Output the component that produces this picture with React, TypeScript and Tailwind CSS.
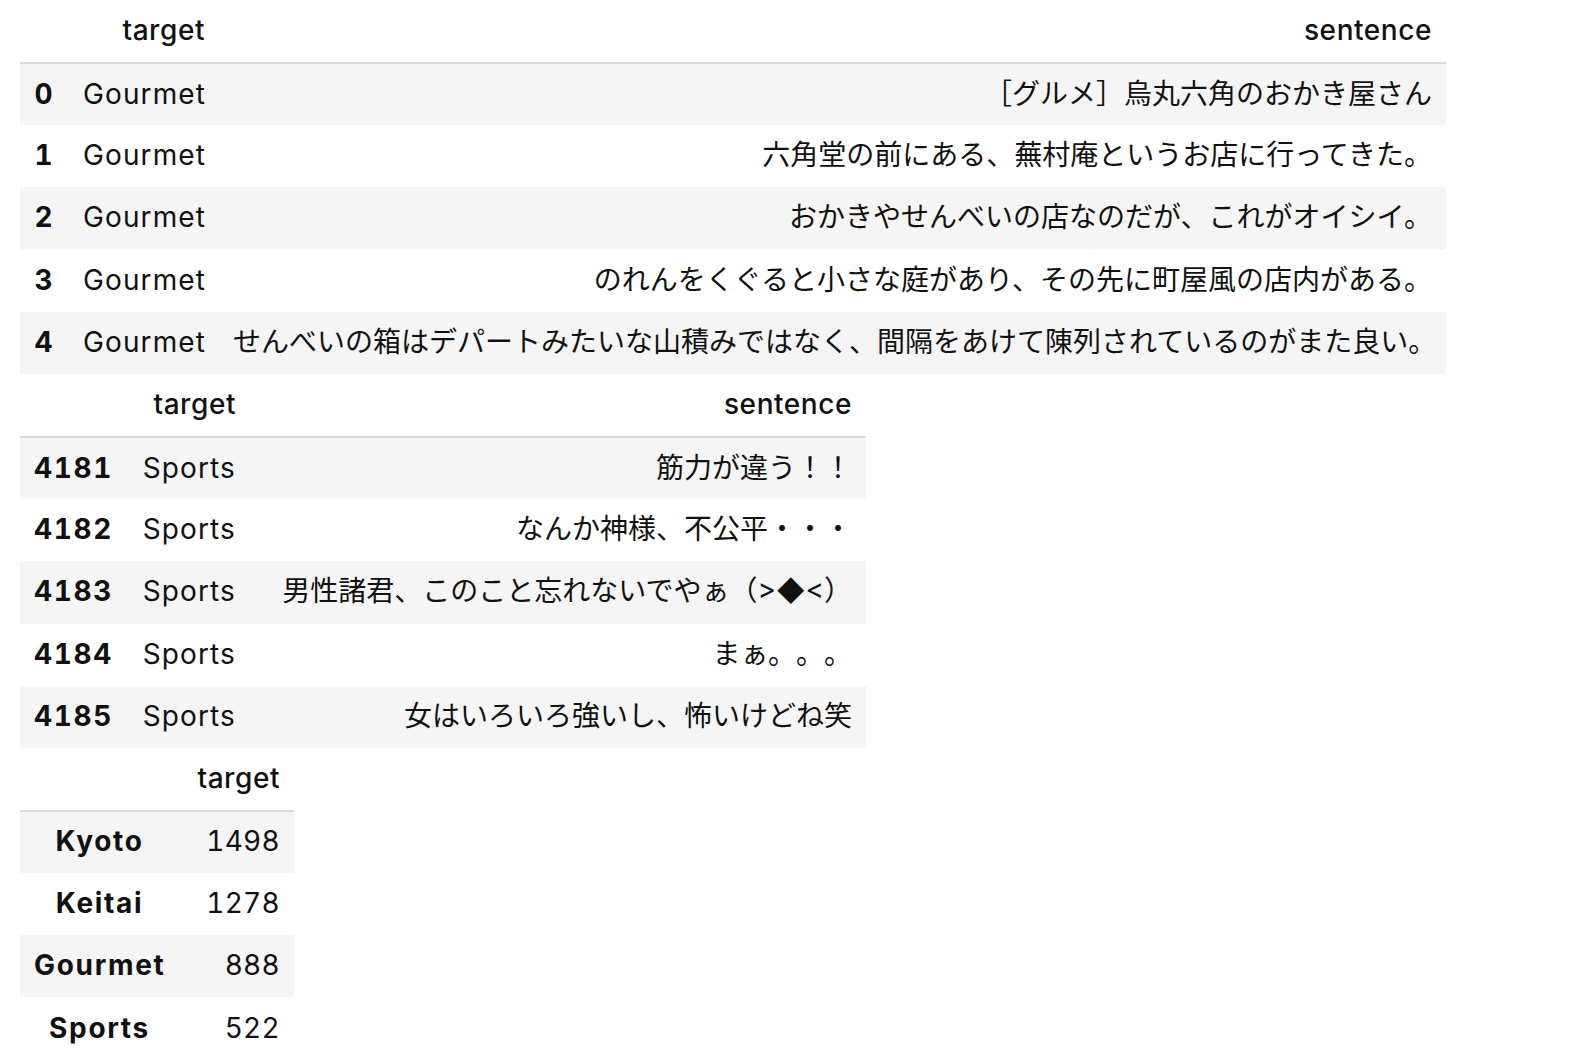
import React from "react";

type Row = { idx: string; cells: string[] };

const font = { fontFamily: '"Inter", "Noto Sans CJK JP", sans-serif' };

const gourmet: Row[] = [
  { idx: "0", cells: ["Gourmet", "［グルメ］烏丸六角のおかき屋さん"] },
  { idx: "1", cells: ["Gourmet", "六角堂の前にある、蕪村庵というお店に行ってきた。"] },
  { idx: "2", cells: ["Gourmet", "おかきやせんべいの店なのだが、これがオイシイ。"] },
  { idx: "3", cells: ["Gourmet", "のれんをくぐると小さな庭があり、その先に町屋風の店内がある。"] },
  { idx: "4", cells: ["Gourmet", "せんべいの箱はデパートみたいな山積みではなく、間隔をあけて陳列されているのがまた良い。"] },
];

const sports: Row[] = [
  { idx: "4181", cells: ["Sports", "筋力が違う！！"] },
  { idx: "4182", cells: ["Sports", "なんか神様、不公平・・・"] },
  { idx: "4183", cells: ["Sports", "男性諸君、このこと忘れないでやぁ（>◆<）"] },
  { idx: "4184", cells: ["Sports", "まぁ。。。"] },
  { idx: "4185", cells: ["Sports", "女はいろいろ強いし、怖いけどね笑"] },
];

const counts: Row[] = [
  { idx: "Kyoto", cells: ["1498"] },
  { idx: "Keitai", cells: ["1278"] },
  { idx: "Gourmet", cells: ["888"] },
  { idx: "Sports", cells: ["522"] },
];

// latin-only cells get a little tracking so Inter reads as wide as the original
const isLatin = (s: string) => /^[\x20-\x7e]+$/.test(s);
const isNumber = (s: string) => /^\d+$/.test(s);

function DataFrame({
  widths,
  headers,
  rows,
}: {
  widths: number[];
  headers: string[];
  rows: Row[];
}) {
  const total = widths.reduce((a, b) => a + b, 0);
  return (
    <table className="table-fixed text-[28px] text-[#111]" style={{ width: total }}>
      <colgroup>
        {widths.map((w, i) => (
          <col key={i} style={{ width: w }} />
        ))}
      </colgroup>
      <thead>
        <tr className="h-[63px]">
          <th className="border-b-2 border-[#d9d9d9]" />
          {headers.map((h) => (
            <th
              key={h}
              className="border-b-2 border-[#d9d9d9] px-[14px] pb-[2px] text-right font-medium leading-none tracking-[0.02em]"
            >
              {h}
            </th>
          ))}
        </tr>
      </thead>
      <tbody>
        {rows.map((r, i) => (
          <tr key={r.idx} className={`h-[62.2px] ${i % 2 === 0 ? "bg-[#f5f5f5]" : "bg-white"}`}>
            <th className="px-[14px] pb-[2px] text-center font-bold leading-none whitespace-nowrap tabular-nums tracking-[0.06em]">
              {r.idx}
            </th>
            {r.cells.map((c, j) => (
              <td
                key={j}
                className={`px-[14px] pb-[2px] text-right font-normal leading-none whitespace-nowrap ${
                  isNumber(c) ? "tabular-nums tracking-[0.01em]" : isLatin(c) ? "tracking-[0.04em]" : ""
                }`}
              >
                {c}
              </td>
            ))}
          </tr>
        ))}
      </tbody>
    </table>
  );
}

export default function App() {
  return (
    <div className="min-h-screen bg-white pl-5 [text-spacing-trim:space-all]" style={font}>
      <DataFrame widths={[49, 150, 1227]} headers={["target", "sentence"]} rows={gourmet} />
      <DataFrame widths={[107, 123, 616]} headers={["target", "sentence"]} rows={sports} />
      <DataFrame widths={[159, 115]} headers={["target"]} rows={counts} />
    </div>
  );
}
